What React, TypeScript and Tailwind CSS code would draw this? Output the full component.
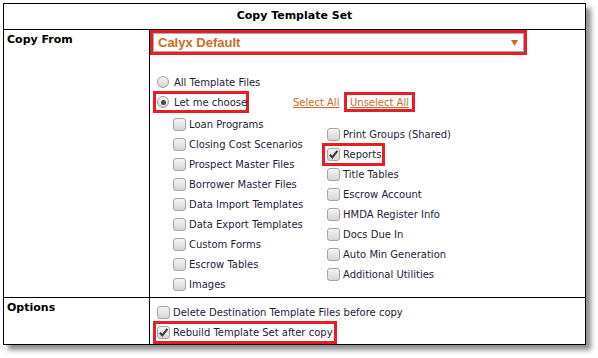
const RED = "border-[#ea1c26]";

function CheckBox({ checked }: { checked?: boolean }) {
  return (
    <span className="inline-flex h-[13px] w-[13px] shrink-0 items-center justify-center rounded-[3px] border border-[#a5a5a5] bg-gradient-to-b from-[#f5f5f5] to-[#d6d6d6]">
      {checked && (
        <svg width="11" height="11" viewBox="0 0 11 11">
          <path d="M1.8 5.8 L4.3 8.3 L9.4 1.8" fill="none" stroke="#3a3a3a" strokeWidth="2.1" />
        </svg>
      )}
    </span>
  );
}

function Radio({ checked }: { checked?: boolean }) {
  return (
    <span className="inline-flex h-[12px] w-[12px] shrink-0 items-center justify-center rounded-full border border-[#a0a0a0] bg-gradient-to-b from-[#f6f6f6] to-[#d4d4d4]">
      {checked && <span className="h-[5px] w-[5px] rounded-full bg-[#4a4a4a]" />}
    </span>
  );
}

function CheckRow({ label, checked, hl }: { label: string; checked?: boolean; hl?: boolean }) {
  return (
    <div className="flex h-[20px] items-center">
      <div className={`flex h-[23px] items-center gap-[3px] border-[3px] pl-[2px] pr-[1px] ${hl ? RED : "border-transparent"}`}>
        <CheckBox checked={checked} />
        <span className="whitespace-nowrap">{label}</span>
      </div>
    </div>
  );
}

const leftItems = [
  "Loan Programs",
  "Closing Cost Scenarios",
  "Prospect Master Files",
  "Borrower Master Files",
  "Data Import Templates",
  "Data Export Templates",
  "Custom Forms",
  "Escrow Tables",
  "Images",
];

const rightItems = [
  "Print Groups (Shared)",
  "Reports",
  "Title Tables",
  "Escrow Account",
  "HMDA Register Info",
  "Docs Due In",
  "Auto Min Generation",
  "Additional Utilities",
];

export default function App() {
  return (
    <div className="min-h-screen bg-white p-[3px] font-['DejaVu_Sans',sans-serif] text-[10px] text-[#1c1c3a]">
      <div className="w-[583px] border border-black bg-white shadow-[5px_5px_5px_rgba(0,0,0,0.45)]">
        <div className="flex h-[26px] items-center justify-center border-b border-black text-[11px] font-bold text-black">
          Copy Template Set
        </div>

        {/* copy from */}
        <div className="grid grid-cols-[146px_1fr] border-b border-black">
          <div className="border-r border-black pl-[3px] pt-[3px] text-[11px] font-bold leading-[14px] text-black">
            Copy From
          </div>
          <div className="h-[267px]">
            <div className={`h-[25px] w-[377px] border-[3px] ${RED}`}>
              <div className="flex h-full items-center justify-between border border-[#a9a9a9] bg-white pl-[4px] pr-[5px]">
                <span className="font-['Liberation_Sans',Arial,sans-serif] text-[13px] font-bold text-[#d2691e]">
                  Calyx Default
                </span>
                <svg width="7" height="6" viewBox="0 0 7 6">
                  <path d="M0 0 H7 L3.5 6 Z" fill="#d2691e" />
                </svg>
              </div>
            </div>

            <div className="mt-[17px] flex h-[20px] items-center">
              <div className="ml-[3px] flex h-[22px] items-center gap-[5px] border-[3px] border-transparent pl-[1px]">
                <Radio />
                <span>All Template Files</span>
              </div>
            </div>
            <div className="flex h-[20px] items-center">
              <div className={`ml-[3px] flex h-[22px] w-[96px] items-center gap-[5px] border-[3px] pl-[1px] ${RED}`}>
                <Radio checked />
                <span className="whitespace-nowrap">Let me choose</span>
              </div>
              <div className="ml-[44px] w-[51px]">
                <span className="text-[#cc6a1f] underline">Select All</span>
              </div>
              <div className={`flex h-[20px] items-center border-[3px] px-[3px] ${RED}`}>
                <span className="whitespace-nowrap text-[#cc6a1f] underline">Unselect All</span>
              </div>
            </div>

            <div className="mt-[2px] flex">
              <div className="ml-[18px] w-[154px]">
                {leftItems.map((t) => (
                  <CheckRow key={t} label={t} />
                ))}
              </div>
              <div className="pt-[10px]">
                {rightItems.map((t) => (
                  <CheckRow key={t} label={t} checked={t === "Reports"} hl={t === "Reports"} />
                ))}
              </div>
            </div>
          </div>
        </div>

        {/* options */}
        <div className="grid grid-cols-[146px_1fr]">
          <div className="border-r border-black pl-[3px] pt-[3px] text-[11px] font-bold leading-[14px] text-black">
            Options
          </div>
          <div className="h-[46px] pt-[4px]">
            <div className="flex h-[20px] items-center">
              <div className="ml-[3px] flex h-[23px] items-center gap-[3px] border-[3px] border-transparent pl-[1px]">
                <CheckBox />
                <span className="whitespace-nowrap">Delete Destination Template Files before copy</span>
              </div>
            </div>
            <div className="flex h-[20px] items-center">
              <div className={`ml-[3px] flex h-[23px] items-center gap-[3px] border-[3px] pl-[1px] pr-[1px] ${RED}`}>
                <CheckBox checked />
                <span className="whitespace-nowrap">Rebuild Template Set after copy</span>
              </div>
            </div>
          </div>
        </div>
      </div>
    </div>
  );
}
